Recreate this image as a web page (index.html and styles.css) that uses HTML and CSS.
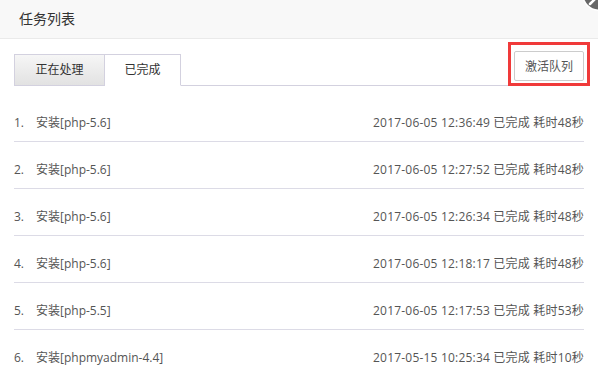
FILE: index.html
```html
<!DOCTYPE html>
<html lang="zh-CN">
<head>
  <meta charset="UTF-8" />
  <title>任务列表</title>
  <link rel="stylesheet" href="styles.css">
</head>
<body>

  <div class="dialog">
    <div class="dialog-title">任务列表</div>

    <svg class="close-icon" width="30" height="24" viewBox="0 0 30 24">
      <circle cx="31" cy="-6" r="17" fill="#fff" />
      <circle cx="31" cy="-6" r="15.5" fill="#676767" />
      <line x1="22" y1="4" x2="27" y2="-1" stroke="#fff" stroke-width="2.5" stroke-linecap="round" />
    </svg>

    <div class="dialog-body">
      <div class="tab-bar">
        <div class="tab">正在处理</div>
        <div class="tab active">已完成</div>
        <div class="mark">
          <button class="btn">激活队列</button>
        </div>
      </div>

      <ul class="task-list">
        <li><span class="num">1.</span><span class="name">安装[php-5.6]</span><span class="info">2017-06-05 12:36:49 已完成 耗时48秒</span></li>
        <li><span class="num">2.</span><span class="name">安装[php-5.6]</span><span class="info">2017-06-05 12:27:52 已完成 耗时48秒</span></li>
        <li><span class="num">3.</span><span class="name">安装[php-5.6]</span><span class="info">2017-06-05 12:26:34 已完成 耗时48秒</span></li>
        <li><span class="num">4.</span><span class="name">安装[php-5.6]</span><span class="info">2017-06-05 12:18:17 已完成 耗时48秒</span></li>
        <li><span class="num">5.</span><span class="name">安装[php-5.5]</span><span class="info">2017-06-05 12:17:53 已完成 耗时53秒</span></li>
        <li><span class="num">6.</span><span class="name">安装[phpmyadmin-4.4]</span><span class="info">2017-05-15 10:25:34 已完成 耗时10秒</span></li>
      </ul>
    </div>
  </div>

</body>
</html>
```

FILE: styles.css
```css
body {
  margin: 0;
  background: #fff;
  font-family: "Open Sans", "Noto Sans CJK SC", sans-serif;
  font-size: 12px;
  color: #555;
  overflow: hidden;
}

.dialog {
  position: relative;
  width: 598px;
  height: 375px;
  overflow: hidden;
}

.dialog-title {
  height: 38px;
  line-height: 38px;
  padding-left: 19px;
  font-size: 14px;
  color: #333;
  background: #f8f8f8;
  border-bottom: 1px solid #eaeaea;
}

.close-icon {
  position: absolute;
  top: 0;
  right: 0;
}

.dialog-body {
  padding: 3px 14px 0 14px;
}

.tab-bar {
  display: flex;
  align-items: flex-end;
  border-bottom: 1px solid #d3d1df;
}

.tab {
  height: 30px;
  line-height: 30px;
  margin-bottom: -1px;
  text-align: center;
  color: #333;
  border: 1px solid #d3d1df;
}

.tab:first-child {
  width: 89px;
  background: linear-gradient(#f6f6f6, #e2e2e2);
}

.tab.active {
  width: 75px;
  border-left: none;
  background: #fff;
  border-bottom-color: #fff;
}

.mark {
  margin-left: auto;
  margin-right: -6px;
  margin-bottom: -1px;
  padding: 6px 3px 2px 3px;
  border: 3px solid #f03a3a;
}

.btn {
  display: block;
  width: 70px;
  height: 30px;
  padding: 0;
  font-family: inherit;
  font-size: 12px;
  color: #555;
  background: #fff;
  border: 1px solid #ccc;
  border-radius: 2px;
}

.task-list {
  list-style: none;
  margin: 9px 0 0 0;
  padding: 0;
}

.task-list li {
  display: flex;
  height: 20px;
  line-height: 20px;
  padding: 18px 0 8px 0;
  border-bottom: 1px solid #dcdbe6;
}

.num {
  width: 22px;
}

.info {
  margin-left: auto;
  letter-spacing: 0.2px;
}
```
